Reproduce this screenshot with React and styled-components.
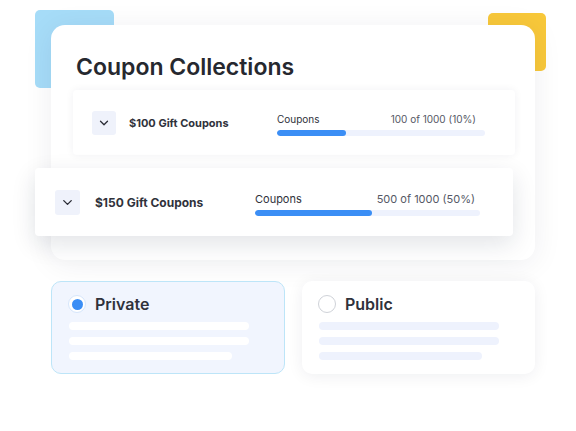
import React from "react";
import styled, { createGlobalStyle } from "styled-components";
import { ChevronDown } from "lucide-react";

const GlobalStyle = createGlobalStyle`
  html, body {
    margin: 0;
    padding: 0;
    background: #ffffff;
  }
  body {
    font-family: Inter, "Noto Sans", sans-serif;
    color: #2b2d36;
  }
`;

const Stage = styled.div`
  position: relative;
  width: 576px;
  height: 431px;
  box-sizing: border-box;
  padding: 25px 41px 0 51px;
  overflow: hidden;
`;

const Deco = styled.div`
  position: absolute;
  left: ${(p) => p.$x}px;
  top: ${(p) => p.$y}px;
  width: ${(p) => p.$w}px;
  height: ${(p) => p.$h}px;
  border-radius: 5px;
  background: ${(p) => p.$color};
  z-index: 0;
`;

const MainCard = styled.div`
  position: relative;
  z-index: 1;
  width: 484px;
  height: 235px;
  box-sizing: border-box;
  padding: 28px 20px 0 22px;
  background: #ffffff;
  border-radius: 14px;
  box-shadow: 0 4px 30px rgba(20, 30, 60, 0.07);
`;

const Title = styled.h1`
  margin: 0 0 0 3px;
  font-size: 23px;
  line-height: 28px;
  font-weight: 600;
  letter-spacing: 0;
  color: #26282f;
`;

const Rows = styled.div`
  margin-top: 9px;
  display: flex;
  flex-direction: column;
  gap: 13px;
`;

const Row = styled.div`
  display: flex;
  align-items: center;
  box-sizing: border-box;
  background: #ffffff;
  border-radius: 4px;
  width: ${(p) => (p.$popped ? 478 : 442)}px;
  height: ${(p) => (p.$popped ? 68 : 65)}px;
  margin-left: ${(p) => (p.$popped ? -38 : 0)}px;
  padding: 0 ${(p) => (p.$popped ? 33 : 30)}px 0 ${(p) => (p.$popped ? 20 : 19)}px;
  box-shadow: ${(p) =>
    p.$popped
      ? "0 8px 24px rgba(20, 30, 60, 0.12)"
      : "0 0 8px rgba(20, 30, 60, 0.06)"};
`;

const Toggle = styled.div`
  flex: none;
  width: ${(p) => (p.$popped ? 25 : 24)}px;
  height: ${(p) => (p.$popped ? 25 : 24)}px;
  border-radius: 3px;
  background: #eff2fb;
  display: flex;
  align-items: center;
  justify-content: center;
  color: #2b2d36;
`;

const RowName = styled.div`
  margin-left: ${(p) => (p.$popped ? 15 : 13)}px;
  font-size: ${(p) => (p.$popped ? 12 : 11)}px;
  font-weight: 700;
  color: #30323b;
`;

const Progress = styled.div`
  margin-left: auto;
  width: ${(p) => (p.$popped ? 225 : 208)}px;
  display: flex;
  flex-direction: column;
  gap: 4px;
  margin-top: ${(p) => (p.$popped ? 3 : 4)}px;
`;

const ProgressHead = styled.div`
  display: flex;
  justify-content: space-between;
  font-size: ${(p) => (p.$popped ? 11 : 10)}px;
  line-height: ${(p) => (p.$popped ? 14 : 13)}px;
  padding-right: ${(p) => (p.$popped ? 5 : 9)}px;
  color: #30323b;

  & span:last-child {
    color: #555865;
  }
`;

const Track = styled.div`
  height: 6px;
  border-radius: 3px;
  background: #eef2fd;
  overflow: hidden;
`;

const Fill = styled.div`
  height: 100%;
  border-radius: 3px;
  background: #3b8ef5;
`;

const Options = styled.div`
  position: relative;
  z-index: 1;
  margin-top: 21px;
  display: flex;
  gap: 17px;
`;

const Option = styled.div`
  width: ${(p) => (p.$selected ? 234 : 233)}px;
  height: 93px;
  box-sizing: border-box;
  padding: 13px 17px 0 ${(p) => (p.$selected ? 16 : 15)}px;
  border-radius: 10px;
  background: ${(p) => (p.$selected ? "#f1f5fe" : "#ffffff")};
  border: 1px solid ${(p) => (p.$selected ? "#bde5f8" : "transparent")};
  box-shadow: ${(p) =>
    p.$selected ? "none" : "0 2px 16px rgba(20, 30, 60, 0.07)"};
`;

const OptionHead = styled.div`
  display: flex;
  align-items: center;
  gap: 9px;
  height: 18px;
`;

const Radio = styled.span`
  flex: none;
  width: 18px;
  height: 18px;
  box-sizing: border-box;
  border-radius: 50%;
  background: #ffffff;
  border: 1px solid ${(p) => (p.$checked ? "#d6e6fb" : "#cfd2d8")};
  display: flex;
  align-items: center;
  justify-content: center;

  &::after {
    content: "";
    width: 11px;
    height: 11px;
    border-radius: 50%;
    background: ${(p) => (p.$checked ? "#3b8ef5" : "transparent")};
  }
`;

const OptionLabel = styled.span`
  font-size: 16px;
  font-weight: 600;
  color: #30323b;
`;

const Lines = styled.div`
  margin-top: 9px;
  margin-left: 1px;
  display: flex;
  flex-direction: column;
  gap: 7px;
`;

const Line = styled.div`
  height: 8px;
  border-radius: 4px;
  width: ${(p) => p.$w}px;
  background: ${(p) => (p.$selected ? "#ffffff" : "#eef2fd")};
`;

const rows = [
  { name: "$100 Gift Coupons", used: 100, total: 1000, pct: 10, fill: 33 },
  { name: "$150 Gift Coupons", used: 500, total: 1000, pct: 50, fill: 52, popped: true },
];

const options = [
  { label: "Private", selected: true },
  { label: "Public", selected: false },
];

function CouponRow({ row }) {
  const p = row.popped;
  return (
    <Row $popped={p}>
      <Toggle $popped={p}>
        <ChevronDown size={p ? 15 : 14} strokeWidth={2.2} />
      </Toggle>
      <RowName $popped={p}>{row.name}</RowName>
      <Progress $popped={p}>
        <ProgressHead $popped={p}>
          <span>Coupons</span>
          <span>
            {row.used} of {row.total} ({row.pct}%)
          </span>
        </ProgressHead>
        <Track $popped={p}>
          <Fill style={{ width: `${row.fill}%` }} />
        </Track>
      </Progress>
    </Row>
  );
}

export default function App() {
  return (
    <>
      <GlobalStyle />
      <Stage>
        <Deco $x={35} $y={10} $w={79} $h={78} $color="#a6dcf8" />
        <Deco $x={488} $y={13} $w={58} $h={58} $color="#f8c83a" />
        <MainCard>
          <Title>Coupon Collections</Title>
          <Rows>
            {rows.map((r) => (
              <CouponRow key={r.name} row={r} />
            ))}
          </Rows>
        </MainCard>
        <Options>
          {options.map((o) => (
            <Option key={o.label} $selected={o.selected}>
              <OptionHead>
                <Radio $checked={o.selected} />
                <OptionLabel>{o.label}</OptionLabel>
              </OptionHead>
              <Lines $selected={o.selected}>
                <Line $selected={o.selected} $w={180} />
                <Line $selected={o.selected} $w={180} />
                <Line $selected={o.selected} $w={163} />
              </Lines>
            </Option>
          ))}
        </Options>
      </Stage>
    </>
  );
}
